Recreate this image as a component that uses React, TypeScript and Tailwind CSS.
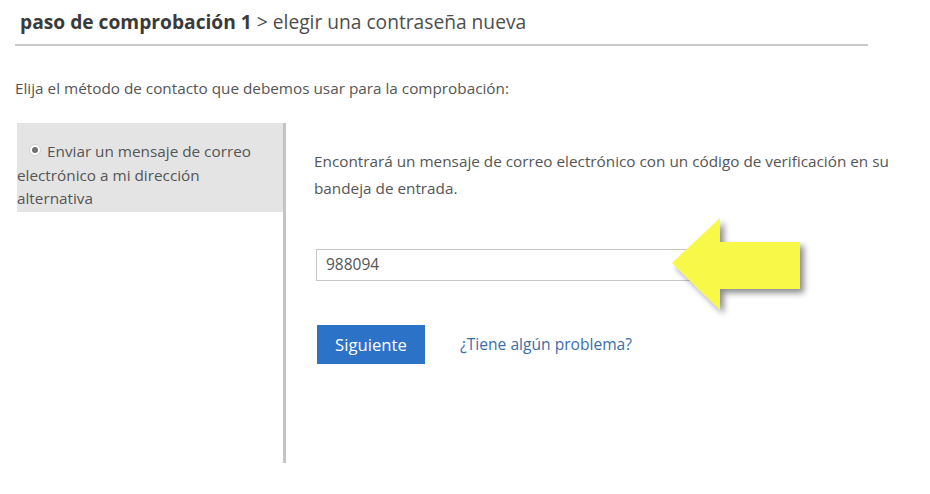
import React from "react";

export default function App() {
  return (
    <div
      className="relative w-[930px] h-[494px] bg-white overflow-hidden text-[#4a4a4a]"
      style={{ fontFamily: '"Open Sans", "Noto Sans", Arial, sans-serif' }}
    >
      <div className="pt-[8px] pl-[20px] text-[19.2px] leading-[27px] text-[#4d4d4d]">
        <span className="font-bold text-[#3a3a3a]">paso de comprobación 1</span>
        <span> &gt; elegir una contraseña nueva</span>
      </div>
      <div className="ml-[15px] mt-[9px] w-[853px] h-[2px] bg-[#c9c9c9]" />
      <div className="pl-[15px] mt-[31px] text-[15.3px] leading-[22px] text-[#555]">
        Elija el método de contacto que debemos usar para la comprobación:
      </div>
      <div className="flex mt-[24px]">
        <div className="ml-[17px] w-[266px]">
          <div className="bg-[#e4e4e4] pt-[17px] pr-[6px] text-[15.3px] leading-[23.5px] text-[#555] h-[89px]">
            <span className="inline-block ml-[12px] mr-[6px] w-[12px] h-[12px] rounded-full border border-[#cfcfcf] bg-white relative -top-[3px] align-middle">
              <span className="absolute left-[2px] top-[2px] w-[6px] h-[6px] rounded-full bg-[#707070]" />
            </span>
            Enviar un mensaje de correo electrónico a mi dirección alternativa
          </div>
        </div>
        <div className="w-[3px] h-[340px] bg-[#c4c4c4]" />
        <div className="pl-[28px] pt-[25px] flex-1">
          <div className="w-[600px] text-[15.3px] leading-[27px] text-[#555]">
            Encontrará un mensaje de correo electrónico con un código de verificación en su bandeja de entrada.
          </div>
          <div className="ml-[2px] mt-[47px] w-[385px] h-[32px] border border-[#c6c6c6] pl-[9px] flex items-center text-[15.5px] text-[#555]">
            988094
          </div>
          <div className="ml-[3px] mt-[44px] flex items-center">
            <div className="w-[108px] h-[39px] bg-[#2c72c7] text-white text-[16.7px] flex items-center justify-center">
              Siguiente
            </div>
            <div className="ml-[35px] text-[15.6px] text-[#3b6ea8]">¿Tiene algún problema?</div>
          </div>
        </div>
      </div>
      <svg
        className="absolute left-[660px] top-[208px]"
        width="170"
        height="120"
        viewBox="0 0 170 120"
      >
        <defs>
          <filter id="sh" x="-20%" y="-20%" width="150%" height="150%">
            <feGaussianBlur in="SourceAlpha" stdDeviation="3" />
            <feOffset dx="4" dy="4" result="b" />
            <feComponentTransfer>
              <feFuncA type="linear" slope="0.45" />
            </feComponentTransfer>
            <feMerge>
              <feMergeNode />
              <feMergeNode in="SourceGraphic" />
            </feMerge>
          </filter>
        </defs>
        <polygon
          points="12,55 60,10 60,34 140,34 140,81 60,81 60,102"
          fill="#f8f84a"
          filter="url(#sh)"
        />
      </svg>
    </div>
  );
}
